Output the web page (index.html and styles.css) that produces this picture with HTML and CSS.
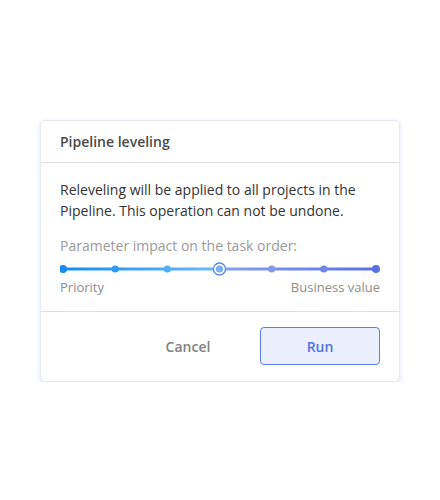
FILE: index.html
```html
<!DOCTYPE html>
<html>
<head>
<meta charset="utf-8">
<link rel="stylesheet" href="styles.css">
</head>
<body>
<div class="card">
  <div class="card-header">Pipeline leveling</div>
  <div class="card-body">
    <p class="desc">Releveling will be applied to all projects in the Pipeline. This operation can not be undone.</p>
    <div class="label">Parameter impact on the task order:</div>
    <svg class="slider" width="320" height="14" viewBox="0 0 320 14">
      <defs>
        <linearGradient id="gl" x1="0" x2="1" y1="0" y2="0">
          <stop offset="0" stop-color="#168cf4"/>
          <stop offset="1" stop-color="#6cbaf7"/>
        </linearGradient>
        <linearGradient id="gr" x1="0" x2="1" y1="0" y2="0">
          <stop offset="0" stop-color="#85a4ee"/>
          <stop offset="1" stop-color="#5a70e2"/>
        </linearGradient>
      </defs>
      <rect x="3" y="5.5" width="156" height="3" fill="url(#gl)"/>
      <rect x="159" y="5.5" width="157" height="3" fill="url(#gr)"/>
      <circle cx="3" cy="7" r="4" fill="#168cf4"/>
      <circle cx="55.2" cy="7" r="3.6" fill="#2d9af5"/>
      <circle cx="107.3" cy="7" r="3.6" fill="#52aef6"/>
      <circle cx="159.5" cy="7" r="6" fill="#fff" stroke="#5b86ee" stroke-width="1.3"/>
      <circle cx="159.5" cy="7" r="3.6" fill="#7aaef5"/>
      <circle cx="211.7" cy="7" r="3.6" fill="#8199ea"/>
      <circle cx="263.8" cy="7" r="3.6" fill="#6f86e6"/>
      <circle cx="316" cy="7" r="4" fill="#5a70e2"/>
    </svg>
    <div class="ends"><span>Priority</span><span>Business value</span></div>
  </div>
  <div class="card-footer">
    <button class="btn btn-cancel">Cancel</button>
    <button class="btn btn-run">Run</button>
  </div>
</div>
</body>
</html>
```
FILE: styles.css
```css
html, body {
  margin: 0;
  padding: 0;
  background: #fff;
}
body {
  padding: 120px 0 0 40px;
  font-family: "Open Sans", "Noto Sans", sans-serif;
}
.card {
  width: 360px;
  box-sizing: border-box;
  border: 1px solid #e6e8f4;
  border-radius: 5px;
  background: #fff;
  box-shadow: 0 2px 5px rgba(100, 110, 220, 0.22);
}
.card-header {
  height: 41px;
  line-height: 41px;
  padding: 0 19px;
  font-size: 14px;
  font-weight: 600;
  color: #4a4a4a;
  border-bottom: 1px solid #dedee4;
}
.card-body {
  padding: 16px 19px 14px 19px;
  border-bottom: 1px solid #dedee4;
}
.desc {
  margin: 0;
  font-size: 14px;
  line-height: 21px;
  color: #333;
}
.label {
  margin-top: 14px;
  font-size: 14px;
  line-height: 21px;
  color: #9a9a9a;
}
.slider {
  display: block;
  margin-top: 6px;
}
.ends {
  display: flex;
  justify-content: space-between;
  margin-top: 1px;
  font-size: 13px;
  line-height: 20px;
  color: #8c8c8c;
}
.card-footer {
  display: flex;
  justify-content: flex-end;
  gap: 12px;
  padding: 15px 19px 16px 19px;
}
.btn {
  width: 120px;
  height: 38px;
  box-sizing: border-box;
  border-radius: 4px;
  font-family: "Open Sans", "Noto Sans", sans-serif;
  font-size: 14px;
  font-weight: 600;
  cursor: pointer;
}
.btn-cancel {
  background: transparent;
  border: none;
  color: #808080;
}
.btn-run {
  background: #ebeffd;
  border: 1px solid #5b7de8;
  color: #5072e2;
}
```
